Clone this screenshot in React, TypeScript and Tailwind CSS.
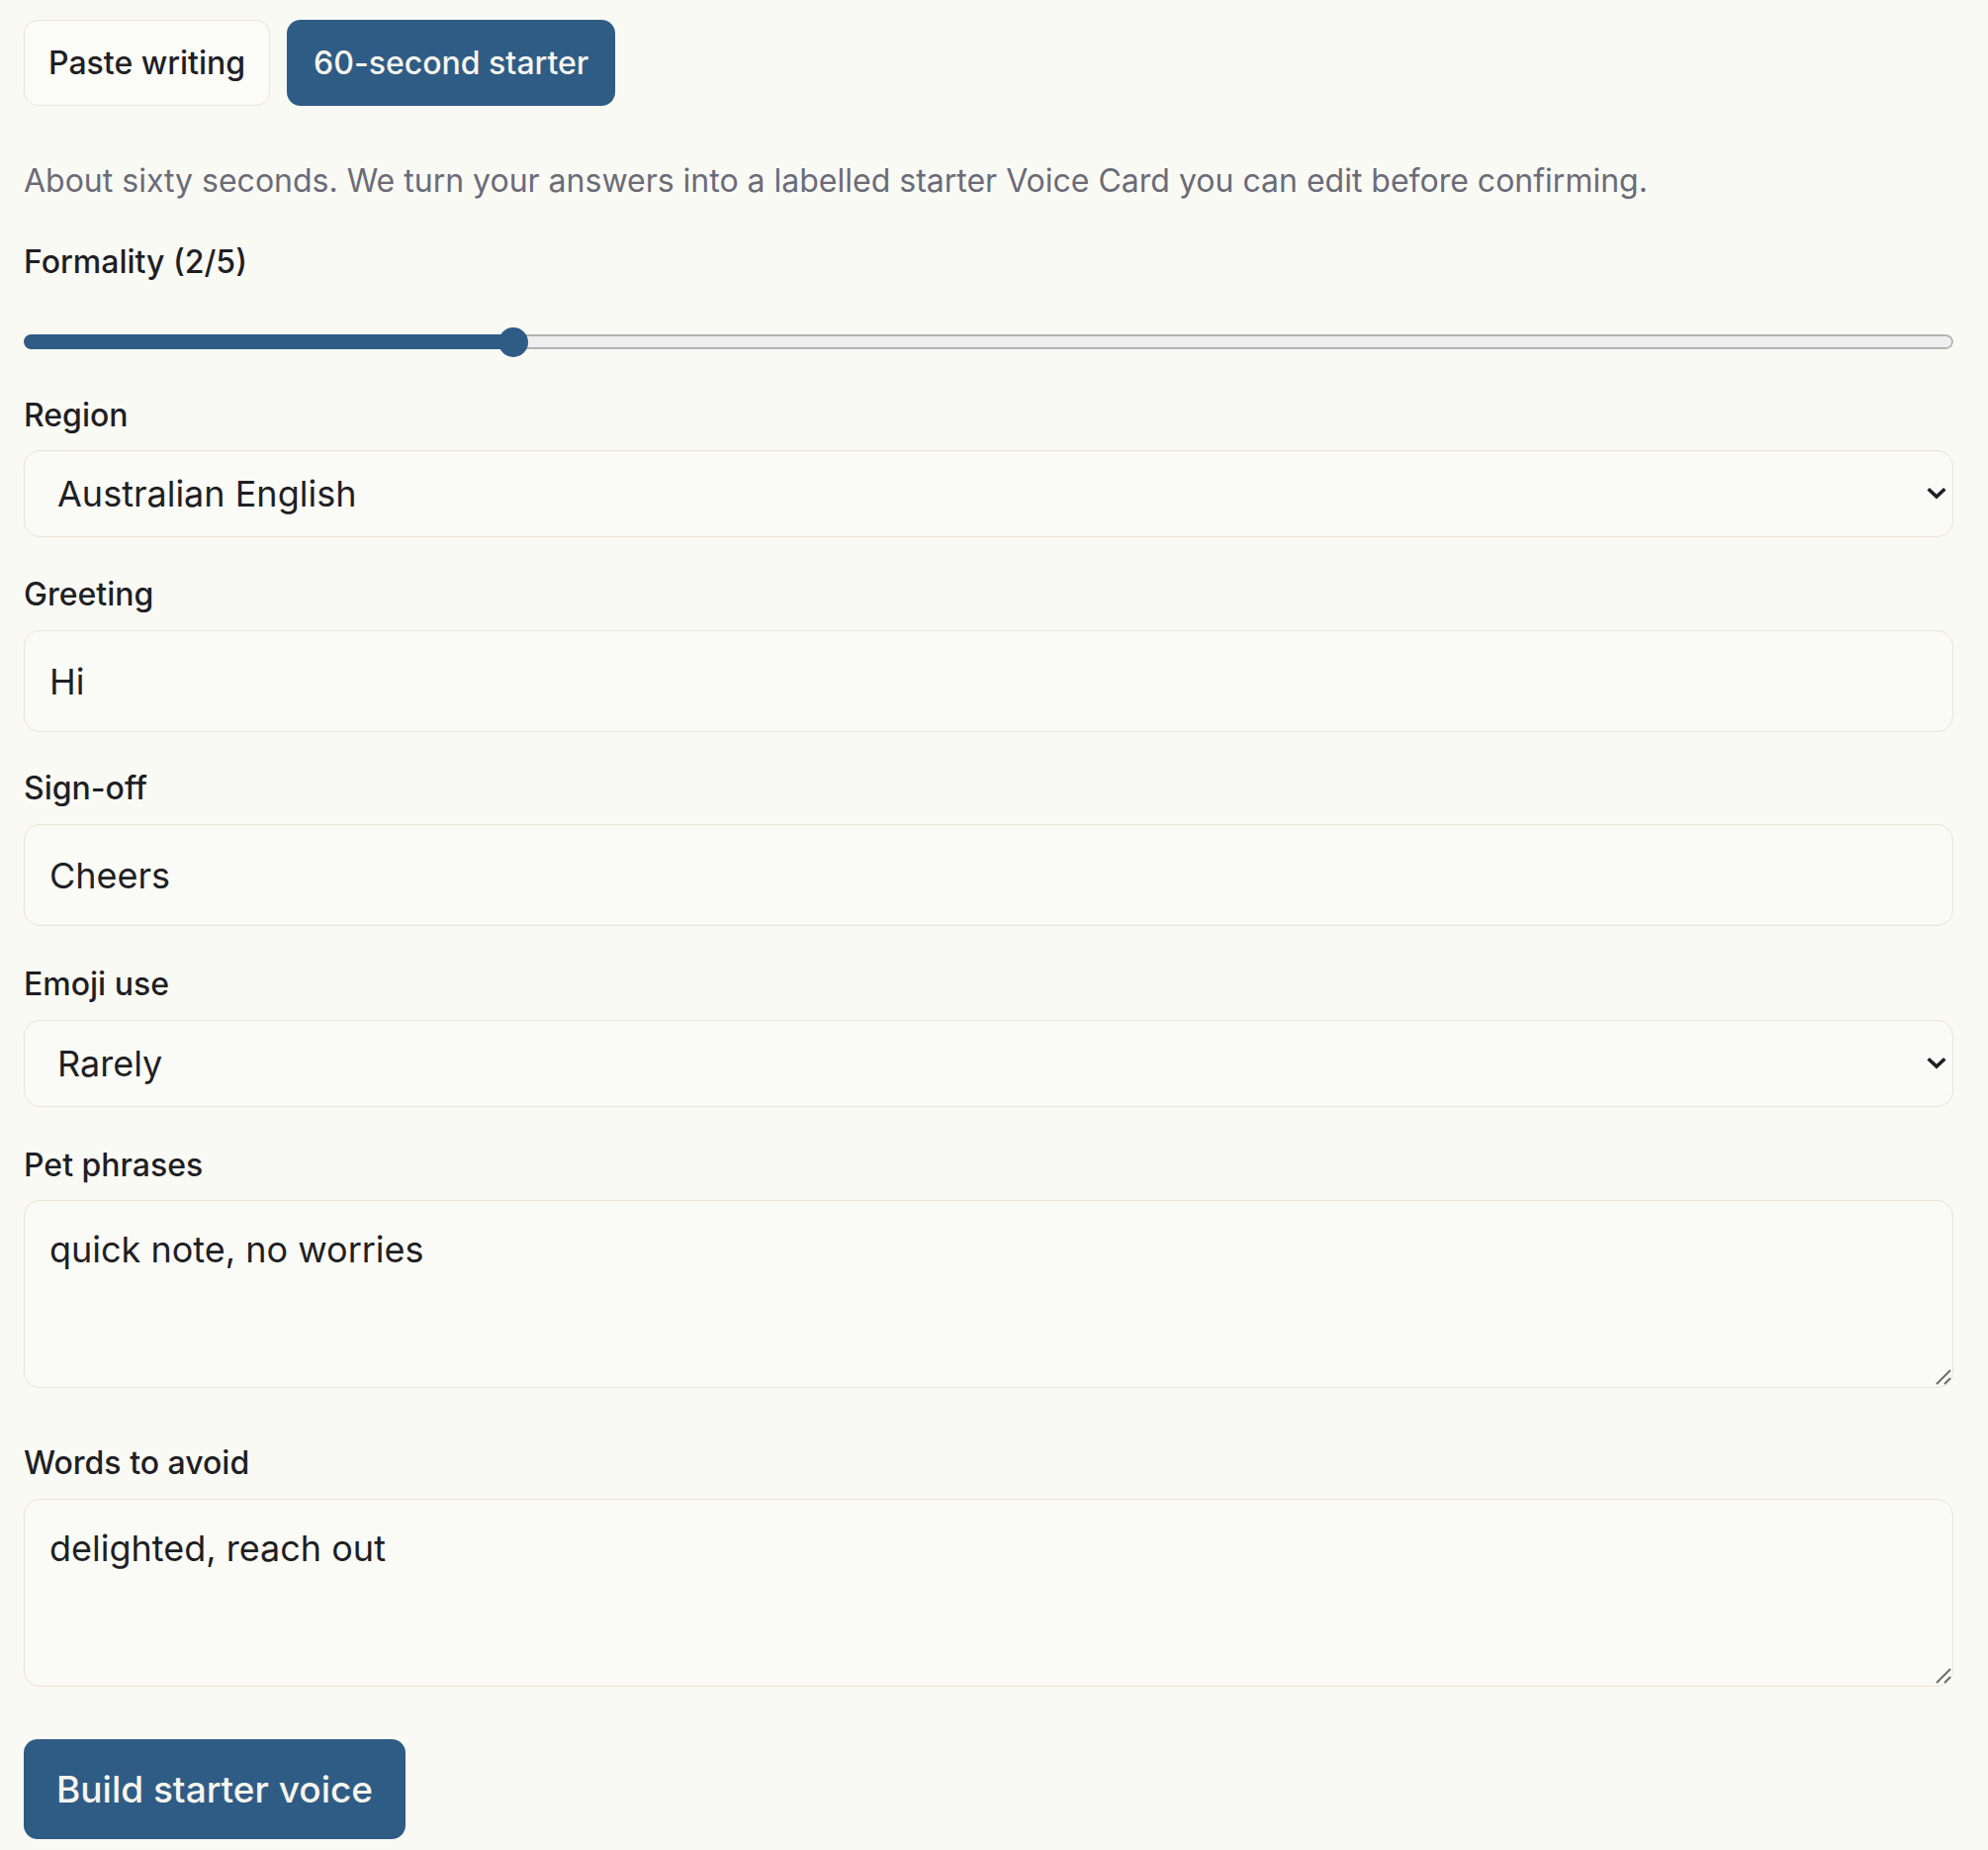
import type { ReactNode } from 'react';

const Chevron = () => (
  <svg
    viewBox="0 0 20 20"
    className="pointer-events-none absolute right-[7px] top-1/2 h-[20px] w-[20px] -translate-y-1/2"
    fill="none"
    stroke="#1f1f24"
    strokeWidth="3.6"
    strokeLinecap="square"
  >
    <path d="M3 6.5 L10 13 L17 6.5" />
  </svg>
);

const ResizeHandle = () => (
  <svg
    viewBox="0 0 16 16"
    className="pointer-events-none absolute bottom-[3px] right-[2px] h-[16px] w-[16px]"
    stroke="#6b6b6b"
    strokeWidth="2"
  >
    <path d="M1 15 L15 1" />
    <path d="M9 15 L15 9" />
  </svg>
);

type FieldProps = {
  label: string;
  top: string;
  gap: string;
  children: ReactNode;
};

const Field = ({ label, top, gap, children }: FieldProps) => (
  <div className={top}>
    <label className="block text-[32px] leading-[47px] font-medium text-[#1f1f24]">{label}</label>
    <div className={`relative ${gap}`}>{children}</div>
  </div>
);

const inputClass =
  'block w-full h-[103px] rounded-[16px] border-[1.5px] border-[#f0e3d1] bg-[#fafaf6] px-[25px] text-[36px] text-[#1f1f24] outline-none';

const selectClass =
  'block w-full h-[88px] appearance-none rounded-[16px] border-[1.5px] border-[#f0e3d1] bg-[#fafaf6] pl-[33px] pr-[40px] text-[36px] text-[#1f1f24] outline-none';

const textareaClass =
  'block w-full h-[190px] resize-none rounded-[16px] border-[1.5px] border-[#f0e3d1] bg-[#fafaf6] px-[25px] pt-[22px] text-[36px] leading-[54px] text-[#1f1f24] outline-none';

export default function App() {
  return (
    <div className="min-h-screen bg-[#fafaf5] font-['Inter','Noto_Sans',sans-serif]">
      <div className="w-[1951px] ml-[24px] pt-[20px] pb-[11px]">
        <div className="flex gap-[17px]">
          <button className="h-[87px] rounded-[14px] border-[1.5px] border-[#f0e3d1] bg-[#fbfbf7] px-[24px] text-[32px] font-medium text-[#1f1f24]">
            Paste writing
          </button>
          <button className="h-[87px] rounded-[14px] bg-[#2f5c85] px-[27px] text-[32px] font-medium text-[#f7f5ee]">
            60-second starter
          </button>
        </div>

        <p className="mt-[52px] text-[32px] leading-[47px] text-[#6b6b78]">
          About sixty seconds. We turn your answers into a labelled starter Voice Card you can edit before confirming.
        </p>

        <div className="mt-[35px]">
          <label className="block text-[32px] leading-[47px] font-medium text-[#1f1f24]">Formality (2/5)</label>
          <div className="relative mt-[43px] h-[30px]">
            <div className="flex h-[15px] translate-y-[7px] overflow-hidden rounded-full">
              <div className="w-[495px] bg-[#2f5c85]" />
              <div className="flex-1 rounded-r-full border-2 border-l-0 border-[#b3b3b3] bg-[#efefef]" />
            </div>
            <div className="absolute left-[480px] top-0 h-[30px] w-[30px] rounded-full bg-[#2f5c85]" />
          </div>
        </div>

        <Field label="Region" top="mt-[35px]" gap="mt-[12px]">
          <select className={selectClass} defaultValue="au">
            <option value="au">Australian English</option>
            <option value="uk">British English</option>
            <option value="us">American English</option>
          </select>
          <Chevron />
        </Field>

        <Field label="Greeting" top="mt-[34px]" gap="mt-[13px]">
          <input className={inputClass} defaultValue="Hi" />
        </Field>

        <Field label="Sign-off" top="mt-[33px]" gap="mt-[13px]">
          <input className={inputClass} defaultValue="Cheers" />
        </Field>

        <Field label="Emoji use" top="mt-[35px]" gap="mt-[13px]">
          <select className={selectClass} defaultValue="rarely">
            <option value="never">Never</option>
            <option value="rarely">Rarely</option>
            <option value="often">Often</option>
          </select>
          <Chevron />
        </Field>

        <Field label="Pet phrases" top="mt-[35px]" gap="mt-[12px]">
          <textarea className={textareaClass} defaultValue="quick note, no worries" />
          <ResizeHandle />
        </Field>

        <Field label="Words to avoid" top="mt-[52px]" gap="mt-[13px]">
          <textarea className={textareaClass} defaultValue="delighted, reach out" />
          <ResizeHandle />
        </Field>

        <button className="mt-[53px] h-[101px] rounded-[14px] bg-[#2f5c85] px-[33px] text-[37px] font-medium text-[#f7f5ee]">
          Build starter voice
        </button>
      </div>
    </div>
  );
}
